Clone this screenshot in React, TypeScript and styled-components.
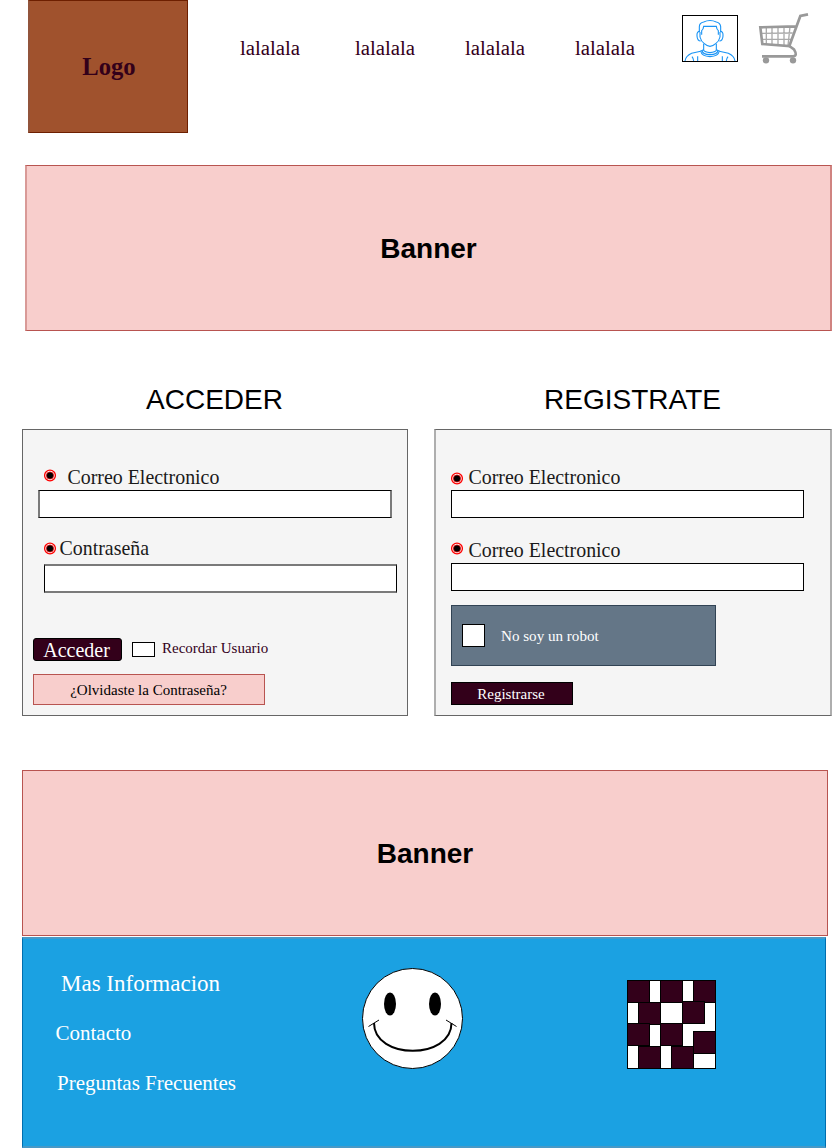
import React from "react";
import styled, { createGlobalStyle } from "styled-components";

const GlobalStyle = createGlobalStyle`
  * { box-sizing: border-box; }
  body { margin: 0; background: #fff; font-family: "Liberation Serif", "Times New Roman", serif; }
`;

const Page = styled.div`
  width: 832px;
  height: 1148px;
  overflow: hidden;
  display: flex;
  flex-direction: column;
`;

const Header = styled.header`
  display: flex;
  align-items: flex-start;
  height: 133px;
  padding-left: 28px;
`;

const Logo = styled.div`
  width: 160px;
  height: 133px;
  display: flex;
  align-items: center;
  justify-content: center;
  background: #a0522d;
  border: 1px solid #6d1f00;
  border-left: 2px solid #92543b;
  color: #33001a;
  font-size: 24.6px;
  font-weight: bold;
  padding-left: 1px;
`;

const Nav = styled.nav`
  display: flex;
  width: 442px;
  margin-left: 52px;
  padding-top: 36px;
`;

const NavLink = styled.a<{ $w: number }>`
  width: ${(p) => p.$w}px;
  color: #33001a;
  font-size: 20.8px;
  line-height: 24px;
`;

const UserBox = styled.div`
  width: 56px;
  height: 47px;
  margin-top: 15px;
  background: #fff;
  border: 1px solid #000;
  svg { display: block; }
`;

const Cart = styled.svg`
  margin: 12px 0 0 20px;
`;

const Banner = styled.section<{ $w: number; $top: number; $left: number; $soft?: boolean }>`
  width: ${(p) => p.$w}px;
  height: 166px;
  flex: none;
  margin: ${(p) => p.$top}px 0 0 ${(p) => p.$left}px;
  padding-top: 2px;
  display: flex;
  align-items: center;
  justify-content: center;
  background: #f8cecc;
  border: 1px solid #b85450;
  ${(p) => p.$soft && "border-left: 2px solid #d99a97; border-right: 2px solid #d08380;"}
  color: #000;
  font: bold 28px "Liberation Sans", Arial, sans-serif;
`;

const Forms = styled.main`
  display: flex;
  gap: 26px;
  margin: 54px 0 0 22px;
`;

const Column = styled.section<{ $w: number }>`
  width: ${(p) => p.$w}px;
  flex: none;
`;

const Title = styled.h2`
  margin: 0;
  height: 44px;
  padding-right: 1px;
  text-align: center;
  font: 400 28px/30px "Liberation Sans", Arial, sans-serif;
`;

const Card = styled.form<{ $soft?: boolean }>`
  height: 287px;
  background: #f5f5f5;
  border: solid #666;
  border-width: 1px ${(p) => (p.$soft ? 2 : 1)}px;
  border-left-color: ${(p) => (p.$soft ? "#aeaeae" : "#666")};
  border-right-color: ${(p) => (p.$soft ? "#aeaeae" : "#666")};
  padding: 35px 0 0 ${(p) => (p.$soft ? 15 : 10)}px;
`;

const Label = styled.label<{ $gap: number; $indent?: number }>`
  display: flex;
  align-items: flex-start;
  gap: ${(p) => p.$gap}px;
  padding-left: ${(p) => p.$indent ?? 0}px;
  height: 25px;
  font-size: 19.9px;
  line-height: 24px;
  color: #1a1a1a;
`;

const Dot = styled.svg<{ $top: number }>`
  flex: none;
  margin-top: ${(p) => p.$top}px;
`;

const Field = styled.input<{ $w: number; $h: number; $left?: number; $blur?: "x" | "y" }>`
  display: block;
  width: ${(p) => p.$w}px;
  height: ${(p) => p.$h}px;
  margin: 0 0 0 ${(p) => p.$left ?? 0}px;
  padding: 0 6px;
  background: #fff;
  border-style: solid;
  border-width: ${(p) => (p.$blur === "y" ? "2px 1px" : p.$blur === "x" ? "1px 2px" : "1px")};
  border-color: ${(p) => (p.$blur === "y" ? "#7a7a7a #000" : p.$blur === "x" ? "#000 #7a7a7a" : "#000")};
`;

const Spacer = styled.div<{ $h: number }>`
  height: ${(p) => p.$h}px;
`;

const ActionRow = styled.div`
  display: flex;
  align-items: flex-start;
  height: 36px;
`;

const Check = styled.span<{ $w: number; $h: number; $inset?: string }>`
  flex: none;
  width: ${(p) => p.$w}px;
  height: ${(p) => p.$h}px;
  margin: ${(p) => p.$inset ?? "0"};
  background: #fff;
  border: 1px solid #000;
`;

const Button = styled.button<{ $w: number; $size: number; $radius?: number }>`
  display: block;
  width: ${(p) => p.$w}px;
  height: 23px;
  padding: 0 2px 0 0;
  background: #33001a;
  border: 1px solid #000;
  border-radius: ${(p) => p.$radius ?? 0}px;
  color: #fff;
  font-family: inherit;
  font-size: ${(p) => p.$size}px;
  line-height: 22px;
`;

const Remember = styled.span`
  margin-left: 7px;
  font-size: 15px;
  line-height: 20px;
  color: #33001a;
`;

const Forgot = styled.a`
  width: 232px;
  height: 31px;
  padding: 2px 1px 0 0;
  display: flex;
  align-items: center;
  justify-content: center;
  background: #f8cecc;
  border: 1px solid #b85450;
  font-size: 15px;
  color: #000;
`;

const Robot = styled.div`
  display: flex;
  align-items: flex-start;
  gap: 16px;
  width: 265px;
  height: 61px;
  padding: 18px 0 0 10px;
  background: #647687;
  border: 1px solid #314354;
  color: #fff;
  font-size: 15.1px;
  line-height: 25px;
`;

const Footer = styled.footer`
  display: flex;
  align-items: flex-start;
  flex: none;
  width: 804px;
  height: 211px;
  margin: 1px 0 0 22px;
  background: #1ba1e2;
  border: 1px solid #006eaf;
  border-top: 2px solid #4799c7;
  border-bottom: 2px solid #4799c7;
`;

const Links = styled.div`
  width: 339px;
  padding-top: 31px;
`;

const FooterLink = styled.a<{ $left: number; $size: number; $h: number }>`
  display: block;
  height: ${(p) => p.$h}px;
  padding-left: ${(p) => p.$left}px;
  font-size: ${(p) => p.$size}px;
  line-height: 28px;
  color: #fff;
`;

const Smiley = styled.svg`
  margin-top: 28px;
`;

const Code = styled.svg`
  margin: 41px 0 0 163px;
`;

const Bullet = ({ top }: { top: number }) => (
  <Dot $top={top} width="12" height="13" viewBox="0 0 12 13">
    <circle cx="6" cy="6.5" r="5.4" fill="#fff" stroke="#f00" strokeWidth="1.3" />
    <circle cx="6" cy="6.5" r="3.6" fill="#000" stroke="#e00" strokeWidth=".7" />
  </Dot>
);

const UserIcon = () => (
  <svg width="54" height="45" viewBox="39 48 162 135" fill="none" stroke="#1a94f5" strokeWidth="3.3">
    <path d="M88 96V80Q88 69 101 66Q120 57 139 66Q151 69 152 80V96" />
    <path d="M95 104V92Q100 88 101 79H139Q140 88 145 92V104" />
    <path d="M90 96V111Q93 124 103 131Q120 147 137 131Q147 124 150 111V96" />
    <path d="M89 94Q80 94 81 108Q82 123 92 123M151 94Q160 94 159 108Q158 123 148 123" />
    <path d="M101 131V151Q104 157 120 158Q136 157 139 151V131" />
    <path d="M101 149L92 153Q95 169 120 170Q145 169 148 153L139 149M96 151Q97 163 120 164Q143 163 144 151" />
    <path d="M92 154L65 160Q47 168 45 183M148 154L175 160Q193 168 195 183M66 170Q71 176 71 183M174 170Q169 176 169 183M83 169V183M157 169V183" />
  </svg>
);

const squares = [
  [0, 0], [33, 0], [66, 0], [11, 22], [55, 21],
  [0, 43], [33, 43], [66, 51], [11, 66], [44, 66],
];

export default function App() {
  return (
    <Page>
      <GlobalStyle />
      <Header>
        <Logo>Logo</Logo>
        <Nav>
          <NavLink $w={115}>lalalala</NavLink>
          <NavLink $w={110}>lalalala</NavLink>
          <NavLink $w={110}>lalalala</NavLink>
          <NavLink $w={107}>lalalala</NavLink>
        </Nav>
        <UserBox><UserIcon /></UserBox>
        <Cart width="52" height="52" viewBox="264 36 156 156" fill="none" stroke="#999">
          <path d="M275 100L368 99M277 118L363 118M289 82V132M306 82V134M324 82V135M342 81V136M360 80L354 137" strokeWidth="4" stroke="#aaa" />
          <path d="M414 43L391 48L358 138L277 132L271 82L378 79" strokeWidth="8" />
          <path d="M358 138L372 148Q384 168 369 169H276" strokeWidth="8" />
          <circle cx="288" cy="181" r="9.5" fill="#999" stroke="none" />
          <circle cx="369" cy="181" r="9.5" fill="#999" stroke="none" />
        </Cart>
      </Header>

      <Banner $w={807} $top={32} $left={25} $soft>Banner</Banner>

      <Forms>
        <Column $w={386}>
          <Title>ACCEDER</Title>
          <Card>
            <Label $gap={11.5} $indent={11}><Bullet top={4} />Correo Electronico</Label>
            <Field $w={354} $h={28} $left={5} $blur="x" aria-label="Correo Electronico" />
            <Spacer $h={18} />
            <Label $gap={3.5} $indent={11}><Bullet top={6} />Contraseña</Label>
            <Spacer $h={3} />
            <Field $w={353} $h={29} $left={11} $blur="y" type="password" aria-label="Contraseña" />
            <Spacer $h={45} />
            <ActionRow>
              <Button $w={89} $size={20} $radius={3} type="button">Acceder</Button>
              <Check $w={23} $h={15} $inset="4px 0 0 10px" />
              <Remember>Recordar Usuario</Remember>
            </ActionRow>
            <Forgot>¿Olvidaste la Contraseña?</Forgot>
          </Card>
        </Column>

        <Column $w={398}>
          <Title>REGISTRATE</Title>
          <Card $soft>
            <Label $gap={5.5}><Bullet top={7} />Correo Electronico</Label>
            <Field $w={353} $h={28} aria-label="Correo Electronico" />
            <Spacer $h={20} />
            <Label $gap={5.5}><Bullet top={4} />Correo Electronico</Label>
            <Field $w={353} $h={28} aria-label="Correo Electronico" />
            <Spacer $h={14} />
            <Robot><Check $w={23} $h={23} />No soy un robot</Robot>
            <Spacer $h={16} />
            <Button $w={122} $size={15} type="button">Registrarse</Button>
          </Card>
        </Column>
      </Forms>

      <Banner $w={806} $top={54} $left={22}>Banner</Banner>

      <Footer>
        <Links>
          <FooterLink $left={38} $size={23} $h={49}>Mas Informacion</FooterLink>
          <FooterLink $left={32.5} $size={21} $h={50}>Contacto</FooterLink>
          <FooterLink $left={34} $size={21} $h={50}>Preguntas Frecuentes</FooterLink>
        </Links>
        <Smiley width="102" height="102" viewBox="0 0 102 102">
          <circle cx="50.5" cy="51.5" r="50" fill="#fff" stroke="#000" />
          <ellipse cx="28" cy="37" rx="6" ry="11.5" />
          <ellipse cx="73" cy="37" rx="6" ry="11.5" />
          <path d="M12 56C12 93 89.500 93 89.500 56" fill="none" stroke="#000" strokeWidth="2" />
          <path d="M6.500 59.500L17 53M84 53L94.500 59.500" stroke="#000" />
        </Smiley>
        <Code width="89" height="89" viewBox="0 0 89 89">
          <rect x=".5" y=".5" width="88" height="88" fill="#fff" stroke="#000" />
          {squares.map(([x, y]) => (
            <rect key={`${x}-${y}`} x={x + 0.5} y={y + 0.5} width="22" height="22" fill="#33001a" stroke="#000" />
          ))}
        </Code>
      </Footer>
    </Page>
  );
}
